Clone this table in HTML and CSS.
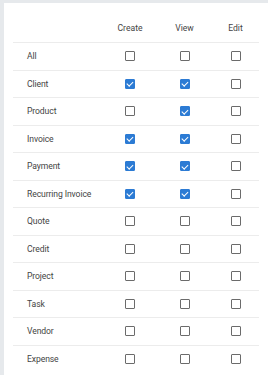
FILE: index.html
```html
<!DOCTYPE html>
<html lang="en">
<head>
<meta charset="UTF-8" />
<meta name="viewport" content="width=device-width, initial-scale=1" />
<title>Permissions</title>
<link rel="stylesheet" href="styles.css">
</head>
<body>

<div class="card">
  <div class="perm-row perm-head">
    <span></span>
    <span class="col">Create</span>
    <span class="col">View</span>
    <span class="col">Edit</span>
  </div>
  <div id="perm-list"></div>
</div>

<script>
  // entity, create, view, edit
  const perms = [
    ['All', 0, 0, 0],
    ['Client', 1, 1, 0],
    ['Product', 0, 1, 0],
    ['Invoice', 1, 1, 0],
    ['Payment', 1, 1, 0],
    ['Recurring Invoice', 1, 1, 0],
    ['Quote', 0, 0, 0],
    ['Credit', 0, 0, 0],
    ['Project', 0, 0, 0],
    ['Task', 0, 0, 0],
    ['Vendor', 0, 0, 0],
    ['Expense', 0, 0, 0]
  ];

  const list = document.getElementById('perm-list');
  perms.forEach(p => {
    const row = document.createElement('div');
    row.className = 'perm-row';
    let html = `<span class="label">${p[0]}</span>`;
    for (let i = 1; i <= 3; i++) {
      html += `<span class="col"><span class="box${p[i] ? ' checked' : ''}"></span></span>`;
    }
    row.innerHTML = html;
    list.appendChild(row);
  });
</script>

</body>
</html>
```

FILE: styles.css
```css
body {
  margin: 0;
  background-color: #e6e9ec;
  font-family: Roboto, sans-serif;
  font-size: 8.6px;
  color: #444;
}
.card {
  margin: 3px 0 0 4px;
  padding: 0 9px 5px 9px;
  background-color: #fff;
}
.perm-row {
  display: grid;
  grid-template-columns: 90px 54px 55px 47px;
  align-items: center;
  height: 27.5px;
  box-sizing: border-box;
  border-bottom: 1px solid #ececec;
}
.perm-head {
  height: 40px;
  align-items: end;
  padding-bottom: 9px;
}
#perm-list .perm-row:last-child {
  border-bottom: none;
}
.label {
  padding-left: 14px;
  letter-spacing: -0.1px;
}
.col {
  display: flex;
  justify-content: center;
}
.box {
  width: 10px;
  height: 10px;
  box-sizing: border-box;
  border: 1.5px solid #6b6b6b;
  border-radius: 1px;
  position: relative;
}
.box.checked {
  background-color: #2c7bd4;
  border-color: #2c7bd4;
}
.box.checked::after {
  content: '';
  position: absolute;
  left: 2.2px;
  top: 0.6px;
  width: 2.5px;
  height: 5px;
  border: solid #fff;
  border-width: 0 1.3px 1.3px 0;
  transform: rotate(45deg);
}
```
